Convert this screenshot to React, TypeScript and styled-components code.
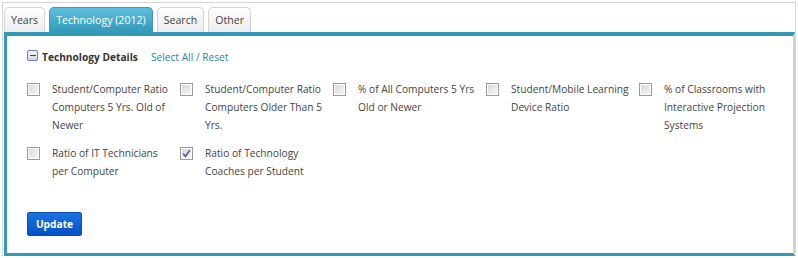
import React from 'react'
import styled, { createGlobalStyle } from 'styled-components'

const GlobalStyle = createGlobalStyle`
  body {
    margin: 0;
    background: #fff;
    font-family: 'Open Sans', 'DejaVu Sans', sans-serif;
    font-size: 10.2px;
    color: #333;
  }
`

const Frame = styled.div`
  margin: 2px 0 0 2px;
  width: 794px;
  height: 254px;
  border: 1px solid #d6d6d6;
  border-bottom: none;
  padding: 4px 0 0 1px;
  box-sizing: border-box;
  display: flex;
  flex-direction: column;
`

const TabBar = styled.div`
  display: flex;
  gap: 4px;
  height: 25px;
  align-items: flex-end;
`

const Tab = styled.div<{ $active?: boolean }>`
  height: 25px;
  box-sizing: border-box;
  padding: 0 6px;
  display: flex;
  align-items: center;
  font-size: 10.6px;
  border: 1px solid ${(p) => (p.$active ? '#3a9dbd' : '#d3d3d3')};
  border-bottom: none;
  border-radius: 5px 5px 0 0;
  color: ${(p) => (p.$active ? '#fff' : '#444')};
  background: ${(p) =>
    p.$active
      ? 'linear-gradient(#5cbfdc, #3399b9)'
      : 'linear-gradient(#fdfdfd, #ececec)'};
`

const Panel = styled.div`
  flex: 1;
  border-top: 4px solid #3399b7;
  border-left: 3px solid #3399b7;
  border-bottom: 3px solid #3399b7;
  border-right: 2px solid #d0d0d0;
  padding: 13px 20px 0 20px;
  box-sizing: border-box;
`

const Heading = styled.div`
  display: flex;
  align-items: center;
  height: 16px;
`

const Toggle = styled.span`
  width: 9px;
  height: 9px;
  border: 1px solid #6b7fb5;
  border-radius: 2px;
  background: linear-gradient(#f4f6fb, #cfd6ea);
  display: inline-flex;
  align-items: center;
  justify-content: center;
  margin-right: 4px;
  margin-top: -3px;
  &::after {
    content: '';
    width: 6px;
    height: 1px;
    background: #3a4a78;
  }
`

const Title = styled.span`
  font-weight: 700;
  color: #333;
`

const Links = styled.span`
  margin-left: 13px;
  color: #2b86ad;
`

const Grid = styled.div`
  display: grid;
  grid-template-columns: repeat(5, 153px);
  row-gap: 10px;
  margin-top: 15px;
`

const Item = styled.label`
  display: flex;
  align-items: flex-start;
`

const Box = styled.span`
  flex: none;
  width: 13px;
  height: 13px;
  box-sizing: border-box;
  margin-top: 3px;
  border: 1px solid #9a9a9a;
  box-shadow: inset 0 0 0 1px #fff;
  background: linear-gradient(135deg, #d8d8d8, #f7f7f7);
  display: flex;
  align-items: center;
  justify-content: center;
`

const Label = styled.span`
  margin-left: 12px;
  width: 122px;
  line-height: 18px;
  color: #444;
`

const UpdateButton = styled.button`
  margin-top: 32px;
  height: 24px;
  width: 55px;
  padding: 0;
  border: 1px solid #0a4fb8;
  border-radius: 2px;
  background: linear-gradient(#1a73e0, #0350c8);
  color: #fff;
  font-family: 'Open Sans', 'DejaVu Sans', sans-serif;
  font-weight: 700;
  font-size: 10.2px;
`

const items = [
  { text: 'Student/Computer Ratio Computers 5 Yrs. Old of Newer' },
  { text: 'Student/Computer Ratio Computers Older Than 5 Yrs.' },
  { text: '% of All Computers 5 Yrs Old or Newer' },
  { text: 'Student/Mobile Learning Device Ratio' },
  { text: '% of Classrooms with Interactive Projection Systems' },
  { text: 'Ratio of IT Technicians per Computer' },
  { text: 'Ratio of Technology Coaches per Student', checked: true },
]

const Check = () => (
  <svg width="9" height="9" viewBox="0 0 9 9">
    <path d="M1.2 4.6 L3.4 7.4 L7.8 1.2" fill="none" stroke="#4b5d96" strokeWidth="1.6" />
  </svg>
)

const App: React.FC = () => (
  <>
    <GlobalStyle />
    <Frame>
      <TabBar>
        <Tab>Years</Tab>
        <Tab $active>Technology (2012)</Tab>
        <Tab>Search</Tab>
        <Tab>Other</Tab>
      </TabBar>
      <Panel>
        <Heading>
          <Toggle />
          <Title>Technology Details</Title>
          <Links>Select All / Reset</Links>
        </Heading>
        <Grid>
          {items.map((it) => (
            <Item key={it.text}>
              <Box>{it.checked && <Check />}</Box>
              <Label>{it.text}</Label>
            </Item>
          ))}
        </Grid>
        <UpdateButton>Update</UpdateButton>
      </Panel>
    </Frame>
  </>
)

export default App
